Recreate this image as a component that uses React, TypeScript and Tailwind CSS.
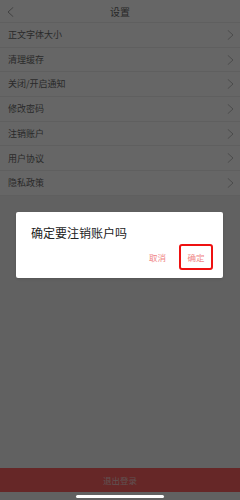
const items = [
  "正文字体大小",
  "清理缓存",
  "关闭/开启通知",
  "修改密码",
  "注销账户",
  "用户协议",
  "隐私政策",
];

function Chevron({ left, className }: { left?: boolean; className?: string }) {
  return (
    <svg width="7" height="10" viewBox="0 0 7 10" fill="none" className={className}>
      <polyline
        points={left ? "6,0.5 1,5 6,9.5" : "1,0.5 6,5 1,9.5"}
        stroke="currentColor"
        strokeWidth="0.9"
        strokeLinecap="round"
        strokeLinejoin="round"
      />
    </svg>
  );
}

export default function App() {
  return (
    <div
      className="relative h-[500px] w-[240px] overflow-hidden bg-[#f3f3f3] flex flex-col"
      style={{ fontFamily: '"Noto Sans CJK SC", "Noto Sans", sans-serif' }}
    >
      {/* Header */}
      <div className="relative h-[23px] flex items-center justify-center bg-white border-b border-[#eeeeee]">
        <Chevron left className="absolute left-[7px] top-[7px] text-[#999]" />
        <span className="text-[10px] text-[#666]">设置</span>
      </div>

      {/* List */}
      <div className="bg-white">
        {items.map((label) => (
          <div
            key={label}
            className="h-[24.7px] flex items-center justify-between pl-[8px] pr-[6px] border-b border-[#eeeeee]"
          >
            <span className="text-[9px] text-[#6a6a6a]">{label}</span>
            <Chevron className="text-[#b5b5b5]" />
          </div>
        ))}
      </div>

      <div className="flex-1" />

      {/* Logout */}
      <div className="h-[24px] flex items-center justify-center bg-[#ff6262]">
        <span className="text-[8.5px] text-[#f0caca]">退出登录</span>
      </div>
      <div className="h-[8px]" />

      {/* Mask */}
      <div className="absolute inset-0 bg-black/[0.6]" />

      {/* Dialog */}
      <div className="absolute left-[16px] top-[212px] w-[207px] h-[66px] bg-white rounded-[2px] shadow-sm flex flex-col">
        <div className="pl-[15px] pt-[13px] text-[12px] leading-[16px] text-[#222]">确定要注销账户吗</div>
        <div className="mt-auto mb-[8px] mr-[10px] flex items-center justify-end">
          <span className="text-[8.5px] text-[#f08585] mr-[13px]">取消</span>
          <div className="h-[26px] w-[34px] border-2 border-[#ee1111] rounded-[3px] flex items-center justify-center">
            <span className="text-[8.5px] text-[#f08585]">确定</span>
          </div>
        </div>
      </div>

      {/* Home indicator */}
      <div className="absolute left-[76px] bottom-[2px] h-[3px] w-[88px] rounded-full bg-white" />
    </div>
  );
}
